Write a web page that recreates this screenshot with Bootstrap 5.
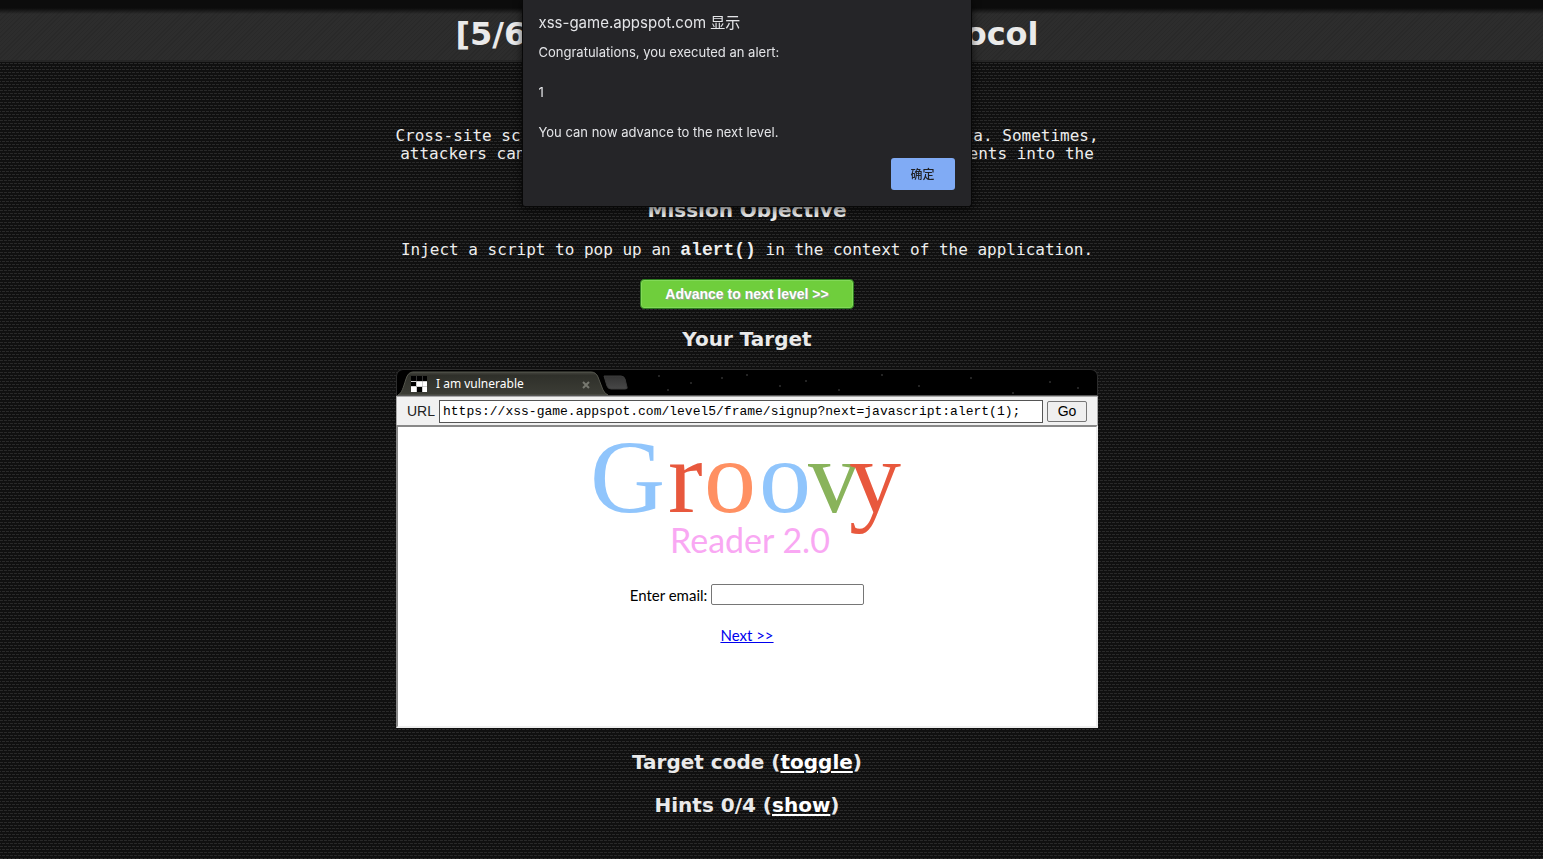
<!DOCTYPE html>
<html lang="en">
<head>
<meta charset="utf-8">
<meta name="viewport" content="width=device-width, initial-scale=1">
<title>XSS game: Level 5</title>
<link href="https://cdn.jsdelivr.net/npm/bootstrap@5.3.0/dist/css/bootstrap.min.css" rel="stylesheet">
<style>
  body {
    color: #eee; font: 16px/18px "DejaVu Sans Mono", monospace;
    background:
      conic-gradient(from 270deg at 3px 1px, #292929 90deg, transparent 0) 0 0 / 4px 6px,
      conic-gradient(from 270deg at 3px 1px, #292929 90deg, transparent 0) 2px 3px / 4px 6px,
      #101010;
  }
  .topbar { height: 62px; padding-top: 10px; border-bottom: 2px solid #262626;
    background:
      linear-gradient(#0c0c0c 0 8px, transparent 14px),
      repeating-linear-gradient(135deg, #2d2d2d 0 2px, #292929 2px 3px); }
  .shifted { padding-right: 49px; }
  h1, h2 { font-family: "DejaVu Sans", sans-serif; font-weight: 700; margin: 0; color: #eaeaea; }
  h1 { font-size: 32px; line-height: 48px; white-space: nowrap; }
  h2 { font-size: 20px; line-height: 24px; }
  h2 a, h2 a:hover { color: #fff; text-underline-offset: 2px; }
  .level { width: 704px; max-width: 100%; padding: 65px 0 40px; }
  .intro { margin: 0 0 17px; }
  .goal { margin: 19px 0 20px; }
  .level code { font: bold 18px/18px "Liberation Mono", monospace; color: inherit; }
  .advance { display: block; width: 214px; height: 30px; padding: 0; border: 1px solid #2f7d20; border-radius: 4px; color: #fff;
    background: #6fce3c; font: bold 14px/26px "Liberation Sans", sans-serif; box-shadow: inset 0 0 0 1px #82d957; text-shadow: 1px 1px 1px #9f9f9f; }
  .target-title { margin: 18px 0; }
  .code-title { margin: 22px 0 19px; }
  .browser { margin: 0 1px; }
  .tabstrip { height: 27px; background: #000; border: 1px solid #2c2c2c; border-bottom-color: #555; border-radius: 7px 7px 0 0; overflow: hidden; }
  .tabstrip svg { display: block; width: 100%; height: 25px; }
  .urlbar { height: 29px; background: #f1f1f1; border: 1px solid #aaa; border-width: 1px 1px 0; padding: 0 10px; color: #222;
    font: 14px/18px "Liberation Sans", sans-serif; }
  .urlbar input { height: 23px; min-width: 0; border: 1px solid #555; border-radius: 0; padding: 0 3px; background: #fff; color: #000; font: 13px/18px "Liberation Mono", monospace; }
  .urlbar button { width: 40px; height: 21px; padding: 0; border: 1px solid #767676; border-radius: 2px; background: #efefef; color: #000; font: 14px/17px "Liberation Sans", sans-serif; }
  .frame { height: 303px; background: #fff; color: #000; border: 2px solid; border-color: #888 #eee #eee #888; font: 15px/20px "Lato", sans-serif; }
  .wordmark { width: 310px; height: 134px; display: block; margin: 0 auto 23px; overflow: visible; }
  .frame input { width: 153px; height: 21px; border: 1px solid #767676; border-radius: 2px; }
  .frame a { color: #00e; }
  .alertbox { position: fixed; top: 0; left: 50%; margin-left: -250px; width: 450px; height: 207px; padding: 13px 16px 16px;
    background: #252528; color: #e4e5e8; border: 1px solid #080808; border-top: 0; border-radius: 0 0 3px 3px; box-shadow: 0 2px 8px #000a;
    font: 13px/20px "Inter", "Noto Sans CJK SC", sans-serif; z-index: 10; }
  .alertbox h3 { font-size: 15px; line-height: 20px; font-weight: 400; margin: 0 0 9px; }
  .alertbox p { margin: 0 0 20px; }
  .alertbox p:last-of-type { margin: 0; }
  .confirm { width: 64px; height: 32px; padding: 0; border: 0; border-radius: 3px; background: #80abf5; color: #202124; font: 500 12px/20px "Noto Sans CJK SC", sans-serif; }
</style>
</head>
<body>
<header class="topbar shifted text-center"><h1>[5/6]&nbsp; Level 5: Breaking protocol</h1></header>
<div class="shifted">
<main class="level mx-auto text-center">
  <p class="intro">Cross-site scripting isn't just about correctly escaping data. Sometimes,<br>attackers can do bad things even without injecting new elements into the<br>DOM.</p>
  <h2>Mission Objective</h2>
  <p class="goal">Inject a script to pop up an <code>alert()</code> in the context of the application.</p>
  <button class="advance mx-auto" type="button">Advance to next level &gt;&gt;</button>
  <h2 class="target-title">Your Target</h2>
  <div class="browser">
    <div class="tabstrip">
      <svg aria-label="Browser tab">
        <defs><linearGradient id="tab" x2="0" y2="1"><stop stop-color="#45453f"/><stop offset=".15" stop-color="#2f302a"/><stop offset="1" stop-color="#3c3d36"/></linearGradient>
        <linearGradient id="plus" x2="0" y2="1"><stop stop-color="#333"/><stop offset="1" stop-color="#484848"/></linearGradient></defs>
        <g fill="#303030"><circle cx="262" cy="6" r="1"/><circle cx="271" cy="20" r="1"/><circle cx="294" cy="13" r="1"/><circle cx="325" cy="8" r="1"/><circle cx="350" cy="5" r="1"/><circle cx="383" cy="16" r="1"/><circle cx="409" cy="11" r="1"/><circle cx="442" cy="20" r="1"/><circle cx="485" cy="5" r="1"/><circle cx="522" cy="16" r="1"/><circle cx="574" cy="8" r="1"/><circle cx="616" cy="23" r="1"/><circle cx="653" cy="12" r="1"/><circle cx="681" cy="18" r="1"/></g>
        <path d="M1 25C5 23 6 18 9 9Q11 2 16 2H194Q199 2 201 7L206 20Q208 24 211 25Z" fill="url(#tab)" stroke="#55564d"/>
        <path d="M207 6H224Q227 6 228 9L230 17Q231 19 228 19H214Q211 19 210 16Z" fill="url(#plus)" stroke="#3c3c3c"/>
        <path d="M14 6h16v16H14z" fill="#fff"/>
        <path d="M14 6h16v5H14zM14 12h5v4h-5zM20 17h5v5h-5z" fill="#000"/>
        <path d="M19.500 6v16M25.500 6v16M14 11.500h16M14 16.500h16" stroke="#8886" fill="none"/>
        <text x="39" y="18" font-family="Noto Sans" font-size="12" fill="#fff">I am vulnerable</text>
        <path d="M186 12l6 6M192 12l-6 6" stroke="#777870" stroke-width="2"/>
      </svg>
    </div>
    <form class="urlbar d-flex align-items-center gap-1">
      <label for="url">URL</label>
      <input id="url" class="flex-grow-1" value="https://xss-game.appspot.com/level5/frame/signup?next=javascript:alert(1);">
      <button type="button">Go</button>
    </form>
    <section class="frame">
      <svg class="wordmark" role="img" aria-label="Groovy Reader 2.0">
        <text y="85" font-family="Liberation Serif" font-size="104"><tspan x="-2" fill="#90c5fc">G</tspan><tspan x="76" fill="#e8583d">r</tspan><tspan x="112" fill="#ff9062">o</tspan><tspan x="167" fill="#90c5fc">o</tspan><tspan x="216" fill="#89b35b">v</tspan><tspan x="257" fill="#e8583d">y</tspan></text>
        <text x="78" y="126" font-family="Lato" font-size="34" fill="#f9a8f3">Reader 2.0</text>
      </svg>
      <div class="d-flex justify-content-center align-items-center gap-1">
        <label for="email">Enter email:</label><input id="email" type="text">
      </div>
      <a class="d-inline-block mt-3 pt-1" href="#">Next &gt;&gt;</a>
    </section>
  </div>
  <h2 class="code-title">Target code (<a href="#">toggle</a>)</h2>
  <h2>Hints 0/4 (<a href="#">show</a>)</h2>
</main>
</div>
<div class="alertbox d-flex flex-column" role="alertdialog" aria-label="Alert">
  <h3>xss-game.appspot.com 显示</h3>
  <p>Congratulations, you executed an alert:</p><p>1</p><p>You can now advance to the next level.</p>
  <button class="confirm align-self-end mt-auto flex-shrink-0" type="button">确定</button>
</div>
<script src="https://cdn.jsdelivr.net/npm/bootstrap@5.3.0/dist/js/bootstrap.bundle.min.js"></script>
</body>
</html>
